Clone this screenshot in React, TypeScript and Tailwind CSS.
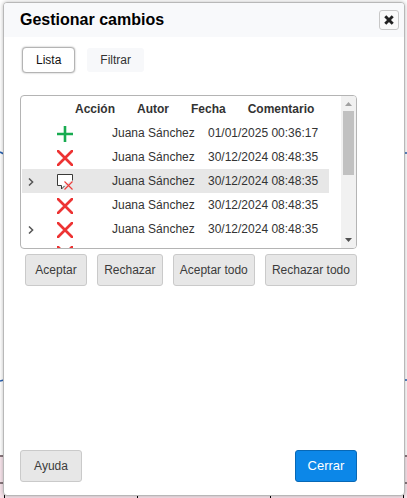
import React from "react";

type Action = "insert" | "delete" | "comment";

interface Change {
  action: Action;
  author: string;
  date: string;
  expandable?: boolean;
  selected?: boolean;
}

const changes: Change[] = [
  { action: "insert", author: "Juana Sánchez", date: "01/01/2025 00:36:17" },
  { action: "delete", author: "Juana Sánchez", date: "30/12/2024 08:48:35" },
  { action: "comment", author: "Juana Sánchez", date: "30/12/2024 08:48:35", expandable: true, selected: true },
  { action: "delete", author: "Juana Sánchez", date: "30/12/2024 08:48:35" },
  { action: "delete", author: "Juana Sánchez", date: "30/12/2024 08:48:35", expandable: true },
  { action: "delete", author: "Juana Sánchez", date: "30/12/2024 08:48:35" },
];

function ActionIcon({ action }: { action: Action }) {
  return (
    <svg width="16" height="16" viewBox="0 0 16 16" fill="none" className="block" aria-hidden="true">
      {action === "insert" && <path d="M8 0V16M0 8H16" stroke="#18ab50" strokeWidth="2.6" />}
      {action === "delete" && <path d="M1 1L15 15M15 1L1 15" stroke="#ed3333" strokeWidth="2.7" strokeLinecap="round" />}
      {action === "comment" && (
        <>
          <path d="M6.5 11.5L4.5 14.5V11.5H0.5V0.5H15.5V6" fill="#fff" />
          <path d="M15.5 6.5V0.5H0.5V11.5H4.5V15L7.5 12" stroke="#3a3a38" />
          <path d="M7.5 7.5L15.5 15.5M15.5 7.5L7.5 15.5" stroke="#ed3d3b" strokeWidth="1.1" />
        </>
      )}
    </svg>
  );
}

function Chevron() {
  return (
    <svg width="6" height="8" viewBox="0 0 6 8" fill="none" className="block" aria-hidden="true">
      <path d="M1 0.5L4.6 4L1 7.5" stroke="#555" strokeWidth="1.5" />
    </svg>
  );
}

function Backdrop() {
  return (
    <div className="absolute inset-0 -z-10 overflow-hidden bg-white" aria-hidden="true">
      <svg className="absolute inset-x-0 top-0 h-full w-full" preserveAspectRatio="none" viewBox="0 0 407 498" fill="none">
        <path d="M0 152L4 154M403 153H407M0 381L4 380M403 380H407" stroke="#2860b0" strokeWidth="1.6" />
      </svg>
      <div className="absolute inset-x-0 bottom-0 h-[43px] border-t-2 border-[#89777d] bg-[#f7e4eb]">
        <div className="mt-[25px] h-[2px] bg-[#89777d]" />
        <div className="flex h-[14px] justify-between pr-[3px] pl-1">
          <i className="w-px bg-black" />
          <i className="w-px bg-black" />
          <i className="w-px bg-black" />
          <i className="w-px bg-black" />
        </div>
      </div>
    </div>
  );
}

function GreyButton({ children }: { children: React.ReactNode }) {
  return (
    <button type="button" className="h-8 min-w-[62px] rounded-[3px] border border-[#cacaca] bg-[#e7e7e7] px-1.5 whitespace-nowrap text-[#3b3b3b]">
      {children}
    </button>
  );
}

export default function App() {
  return (
    <div
      className="relative isolate flex h-screen pt-0.5 pr-0.5 pb-0.5 pl-[3px] text-[12px] leading-4 text-[#333]"
      style={{ fontFamily: '"Liberation Sans", Arial, sans-serif' }}
    >
      <Backdrop />
      <section
        role="dialog"
        aria-labelledby="title"
        className="flex flex-1 flex-col rounded-[4px] border border-[#b8b8b8] bg-white shadow-[0_0_4px_#0004]"
      >
        <header className="flex h-[34px] shrink-0 items-center justify-between rounded-t-[3px] bg-[#f8f9fb] pr-[5px] pl-4">
          <h1 id="title" className="text-[16px] leading-5 font-bold text-black">Gestionar cambios</h1>
          <button type="button" aria-label="Cerrar ventana" className="flex size-5 items-center justify-center rounded-[3px] border border-[#c8c8c8] bg-[#fafafa]">
            <svg width="10" height="10" viewBox="0 0 10 10" aria-hidden="true">
              <path d="M2.3 2.3L7.7 7.7M7.7 2.3L2.3 7.7" stroke="#222" strokeWidth="2.9" strokeLinecap="square" />
            </svg>
          </button>
        </header>

        <main className="flex flex-1 flex-col pr-[47px] pb-[13px] pl-4">
          <div role="tablist" className="flex items-center gap-3 pt-2.5 pl-0.5">
            <button type="button" role="tab" aria-selected="true" className="h-[26px] rounded-[4px] border border-[#b4b4b4] bg-white px-[13px] text-[#111] shadow-[0_0_2px_#0005]">
              Lista
            </button>
            <button type="button" role="tab" aria-selected="false" className="h-6 rounded-[3px] bg-[#f7f8fa] px-[13px]">
              Filtrar
            </button>
          </div>

          <div className="mt-[22px] flex h-[154px] overflow-hidden rounded-[4px] border border-[#b4b4b4]">
            <div className="flex-1 overflow-hidden pt-px pr-3 pl-px">
              <table className="block w-full">
                <thead className="block">
                  <tr className="flex h-6 items-center gap-[22px] pl-[53px] text-left">
                    <th>Acción</th>
                    <th>Autor</th>
                    <th>Fecha</th>
                    <th>Comentario</th>
                  </tr>
                </thead>
                <tbody className="block">
                  {changes.map((c, i) => (
                    <tr key={i} className={c.selected ? "flex h-6 items-center bg-[#e7e7e7]" : "flex h-6 items-center"}>
                      <td className="w-[35px] pt-0.5 pl-1.5">
                        {c.expandable && (
                          <button type="button" aria-label="Expandir" className="block">
                            <Chevron />
                          </button>
                        )}
                      </td>
                      <td className="w-[55px] pt-0.5">
                        <ActionIcon action={c.action} />
                      </td>
                      <td className="w-24 whitespace-nowrap">{c.author}</td>
                      <td className="whitespace-nowrap">{c.date}</td>
                    </tr>
                  ))}
                </tbody>
              </table>
            </div>
            <div className="flex w-[15px] flex-col items-center bg-[#f1f1f1]" aria-hidden="true">
              <svg width="15" height="15" viewBox="0 0 15 15" className="block shrink-0">
                <path d="M4 10H11L7.5 6Z" fill="#a0a0a0" />
              </svg>
              <div className="h-16 w-[11px] bg-[#c1c1c1]" />
              <svg width="15" height="15" viewBox="0 0 15 15" className="mt-auto block shrink-0">
                <path d="M4 5H11L7.5 9Z" fill="#505050" />
              </svg>
            </div>
          </div>

          <div className="mt-[5px] flex justify-between pl-[5px]">
            <GreyButton>Aceptar</GreyButton>
            <GreyButton>Rechazar</GreyButton>
            <GreyButton>Aceptar todo</GreyButton>
            <GreyButton>Rechazar todo</GreyButton>
          </div>

          <footer className="mt-auto flex justify-between">
            <button type="button" className="h-8 w-[62px] rounded-[3px] border border-[#cacaca] bg-[#e7e7e7] text-[#3b3b3b]">
              Ayuda
            </button>
            <button type="button" className="h-8 w-[62px] rounded-[3px] border border-[#0768b6] bg-[#0c87e8] text-[13px] text-white">
              Cerrar
            </button>
          </footer>
        </main>
      </section>
    </div>
  );
}
